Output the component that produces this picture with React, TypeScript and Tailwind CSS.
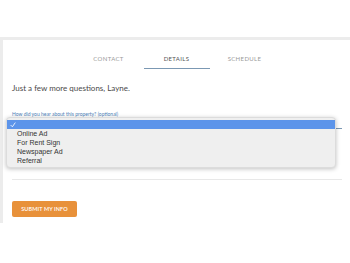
import React from 'react'

const tabs = ['Contact', 'Details', 'Schedule']
const options = ['Online Ad', 'For Rent Sign', 'Newspaper Ad', 'Referral']

export default function App() {
  return (
    <div className="w-[350px] h-[263px] bg-white overflow-hidden pt-[37px]" style={{ fontFamily: 'Lato, "Open Sans", sans-serif' }}>
      <div className="h-[186px] border-t-[3px] border-l-[3px] border-[#ececec] bg-white">
        {/* Tabs */}
        <div className="flex justify-center gap-[2px] pt-[15px]">
          {tabs.map(t => (
            <div key={t} className="w-[66px] flex flex-col items-center">
              <div className={`text-[6px] leading-[8px] uppercase tracking-[0.06em] ${t === 'Details' ? 'text-[#555]' : 'text-[#9a9a9a]'}`}>
                {t}
              </div>
              <div className={`mt-[5px] h-[1px] w-full ${t === 'Details' ? 'bg-[#7b98b3]' : 'bg-transparent'}`} />
            </div>
          ))}
        </div>

        <div className="pl-[9px] pr-[8px]">
          <h1 className="mt-[13px] text-[8px] leading-[12px] text-[#4a4a4a]">Just a few more questions, Layne.</h1>

          {/* Field: source */}
          <div className="mt-[17px] relative">
            <label className="block text-[5px] leading-[7px] text-[#4f7fb8]">How did you hear about this property? (optional)</label>
            <div className="h-[11px] border-b border-[#7b98b3]" />

            <div className="absolute left-[-6px] top-[6px] w-[330px] pt-[2px] pb-[2px] bg-[#efefef] rounded-[4px] shadow-[0_1px_4px_rgba(0,0,0,0.25)] border border-[#dcdcdc]" style={{ fontFamily: '"Liberation Sans", Arial, sans-serif' }}>
              <div className="h-[9px] bg-[#5c94ea] flex items-center pl-[3px] text-white">
                <svg width="6" height="6" viewBox="0 0 10 10" fill="none">
                  <path d="M1.5 5.5 L4 8 L8.5 1.5" stroke="white" strokeWidth="1.4" strokeLinecap="round" strokeLinejoin="round" />
                </svg>
              </div>
              {options.map(o => (
                <div key={o} className="h-[9px] flex items-center pl-[10px] text-[7px] leading-[9px] text-[#333]">{o}</div>
              ))}
            </div>
          </div>

          {/* Field: second */}
          <div className="h-[51px] border-b border-[#e8e8e8]" />

          <button className="mt-[21px] w-[65px] h-[16px] bg-[#e8913a] rounded-[2px] text-white text-[5.5px] font-semibold uppercase tracking-[0.02em] flex items-center justify-center">
            Submit my info
          </button>
        </div>
      </div>
    </div>
  )
}
